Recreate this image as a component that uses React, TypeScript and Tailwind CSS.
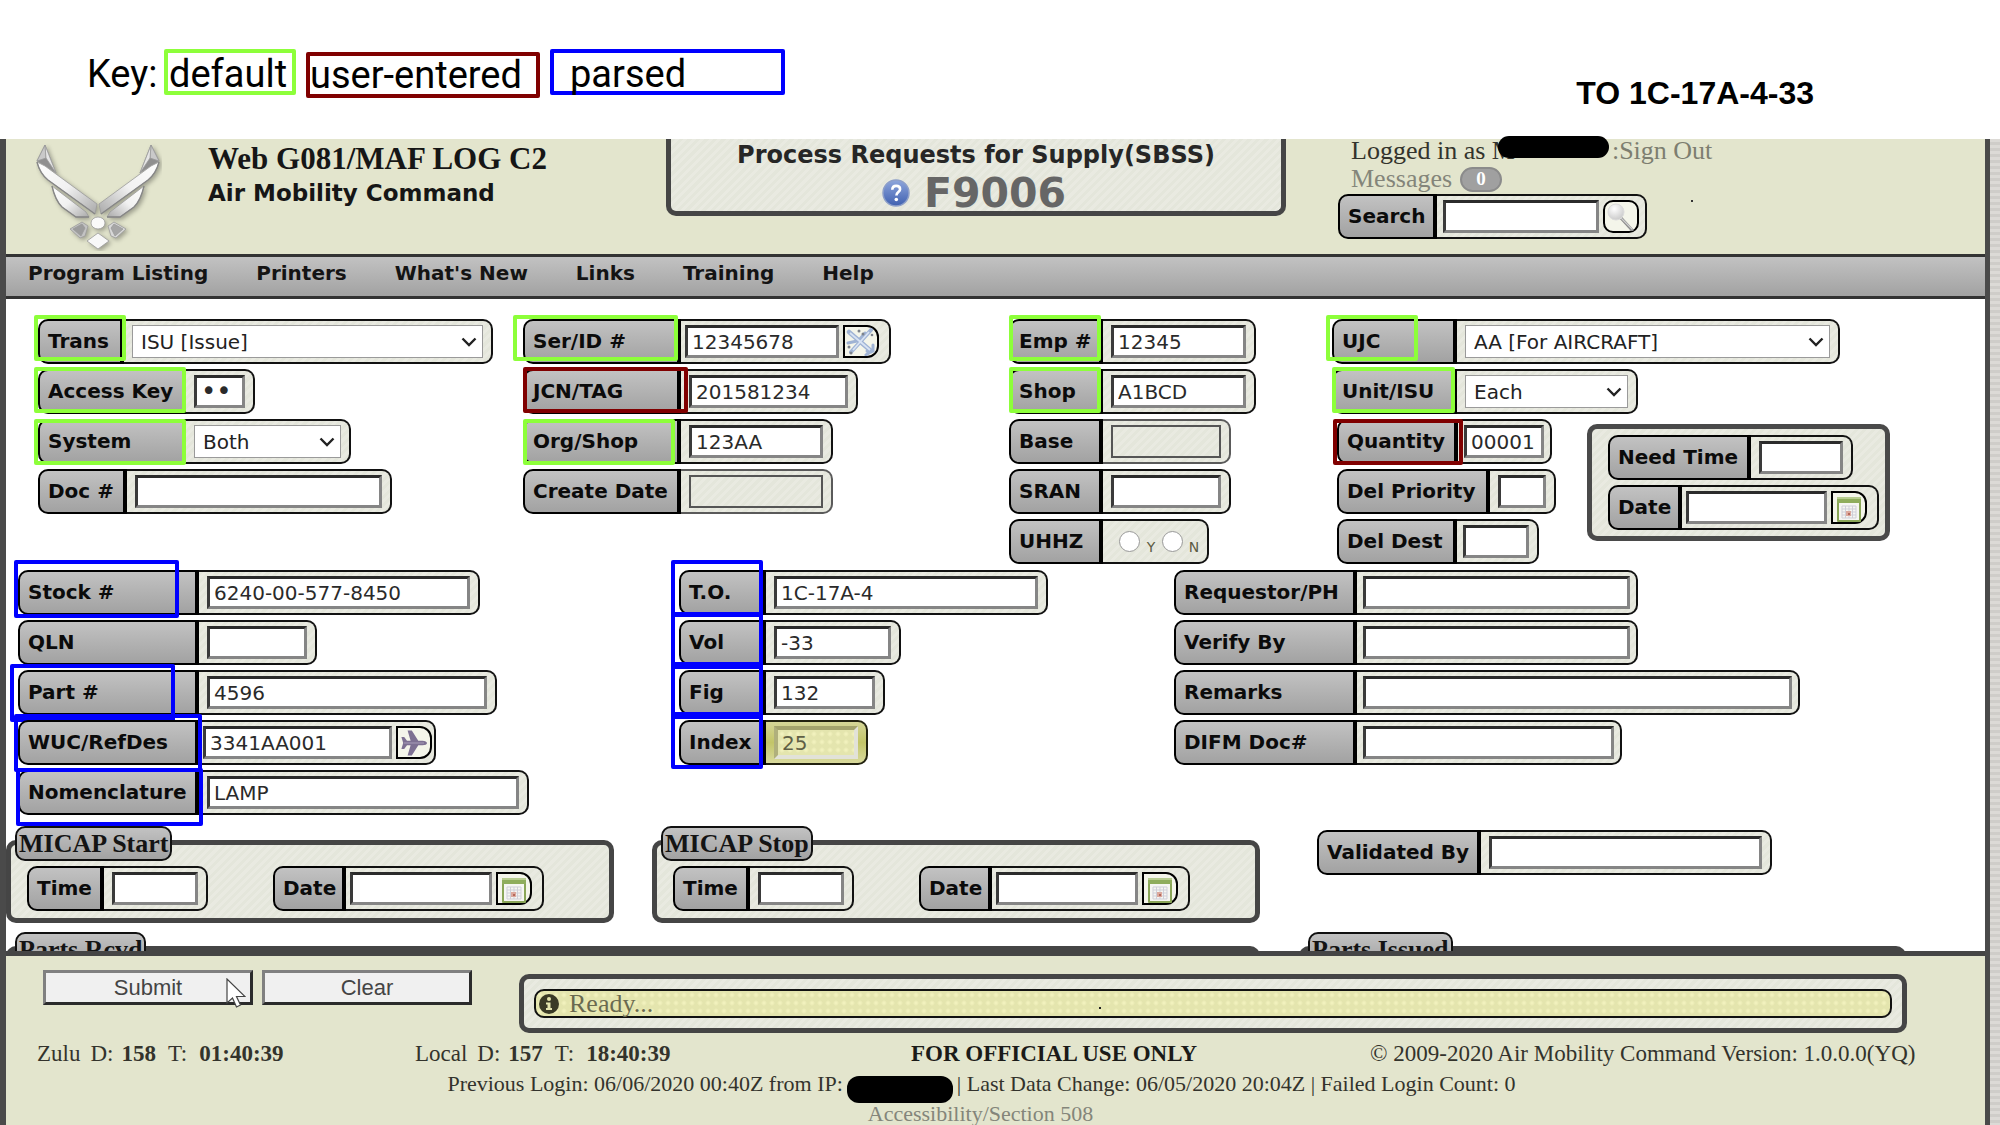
import React, { useId, useState } from "react";

const STRIPES =
  "bg-[repeating-linear-gradient(135deg,#e4e6db_0px,#e4e6db_3px,#e9eae1_3px,#e9eae1_6px)]";
const METAL = "bg-linear-to-b from-[#c2c2c2] to-[#a2a2a2]";
const DOTS =
  "bg-[#e4e5ae] bg-[radial-gradient(circle,#f1f1bd_1px,transparent_3px)] bg-[size:8px_8px]";

type FieldProps = {
  label: string;
  labelWidth: string;
  width: string;
  id?: string;
  mark?: string;
  tone?: "normal" | "disabled" | "yellow";
  pad?: string;
  children: React.ReactNode;
};

function Field({ label, labelWidth, width, id, mark, tone = "normal", pad = "px-2", children }: FieldProps) {
  const toneClass =
    tone === "disabled"
      ? `border-[#5a5a5a] ${STRIPES}`
      : tone === "yellow"
        ? "border-[#22220f] bg-linear-to-b from-[#d5d697] via-[#c3c568] to-[#d9da9d]"
        : `border-[#111] ${STRIPES}`;
  return (
    <div className={`relative flex h-[45px] shrink-0 ${width}`}>
      <label
        htmlFor={id}
        className={`flex shrink-0 items-center rounded-l-[10px] border-2 border-r-4 border-black pl-2 pb-0.5 text-[20px] font-bold whitespace-nowrap text-[#0b0b0b] ${METAL} ${labelWidth}`}
      >
        {label}
      </label>
      <div
        className={`flex min-w-0 flex-1 items-center gap-1 rounded-r-[10px] border-y-2 border-r-2 ${pad} ${toneClass}`}
      >
        {children}
      </div>
      {mark && <span className={`pointer-events-none absolute rounded-[2px] border-4 ${mark}`} />}
    </div>
  );
}

type TextFieldProps = Omit<FieldProps, "children" | "id"> & {
  value?: string;
  type?: string;
  button?: React.ReactNode;
};

function TextField({ value = "", type = "text", button, ...rest }: TextFieldProps) {
  const id = useId();
  const [text, setText] = useState(value);
  const look =
    rest.tone === "disabled"
      ? "border-2 border-[#555] bg-transparent"
      : rest.tone === "yellow"
        ? `border-4 border-t-[#a3a36c] border-l-[#b0b07c] border-r-[#e2e2d8] border-b-[#e2e2d8] text-[#5f5f45] ${DOTS}`
        : "border-[3px] border-t-[#2b2b2b] border-l-[#3a3a3a] border-r-[#858585] border-b-[#858585] bg-white text-[#2a2a2a]";
  return (
    <Field {...rest} id={id}>
      <input
        id={id}
        type={type}
        value={text}
        disabled={rest.tone === "disabled"}
        onChange={(e) => setText(e.target.value)}
        className={`h-[33px] w-full min-w-0 flex-1 px-1 outline-none ${
          type === "password" ? "text-[26px]" : "text-[20px]"
        } ${look}`}
      />
      {button}
    </Field>
  );
}

function SelectField({ value, ...rest }: Omit<FieldProps, "children" | "id"> & { value: string }) {
  const id = useId();
  return (
    <Field {...rest} id={id}>
      <div className="relative h-[33px] min-w-0 flex-1">
        <select
          id={id}
          className="h-full w-full appearance-none border border-[#9a9a9a] bg-white px-2 text-[20px] text-[#222] outline-none"
        >
          <option>{value}</option>
        </select>
        <svg
          viewBox="0 0 16 10"
          className="pointer-events-none absolute top-3 right-1.5 h-2.5 w-4"
          fill="none"
          stroke="#222"
          strokeWidth="2.4"
        >
          <path d="M1.5 1.5 8 8l6.500-6.500" />
        </svg>
      </div>
    </Field>
  );
}

function IconButton({ label, children, round }: { label: string; children: React.ReactNode; round?: boolean }) {
  return (
    <button
      type="button"
      aria-label={label}
      className={`flex h-[33px] w-9 shrink-0 items-center justify-center border-2 border-black bg-[#f4f5ea] ${
        round ? "rounded-[10px]" : "rounded-r-[12px]"
      }`}
    >
      {children}
    </button>
  );
}

function CalendarIcon() {
  return (
    <svg viewBox="0 0 26 28" className="h-7 w-[26px]">
      <rect x="1" y="3" width="24" height="25" rx="1" fill="#8aa657" />
      <rect x="1" y="3" width="24" height="6" fill="#8fad5c" />
      <rect x="1" y="3" width="24" height="2" fill="#b7cd8f" />
      <rect x="3" y="9" width="20" height="17" fill="#f6f6f2" />
      <g stroke="#cfcfd8" strokeWidth="1" fill="none">
        <path d="M6 12h14v12H6zM6 15h14M6 18h14M6 21h14M9.500 12v12M13 12v12M16.500 12v12" />
      </g>
      <rect x="10" y="17" width="5" height="5" fill="#dca99d" />
      <rect x="12" y="19" width="2" height="2" fill="#b5685b" />
    </svg>
  );
}

function PlaneIcon() {
  return (
    <svg viewBox="0 0 28 28" className="h-7 w-7">
      <path
        d="M27 14c0-1.300-2-2.300-4.500-2.300h-4.200L11.800 1.500H7.600l3 10.200H7L4.200 8H1.400l1.800 6-1.800 6h2.800L7 16.300h3.600l-3 10.200h4.200l6.500-10.200h4.200C25 16.300 27 15.300 27 14z"
        fill="#7d7092"
      />
      <path d="M4 14h20" stroke="#a094b2" strokeWidth="1.200" />
    </svg>
  );
}

function AircraftIcon() {
  return (
    <svg viewBox="0 0 30 28" className="h-7 w-[30px]">
      <g stroke="#9fb3d4" fill="none" strokeLinecap="round">
        <path d="M3 4 25 23" strokeWidth="4.500" />
        <path d="M25 2 5 24" strokeWidth="4" />
        <path d="M2 15l9-2M19 5l-5 6M20 27l7-5M27 17v6h-6" strokeWidth="3" />
      </g>
      <path d="M4 5 24 22M23 4 7 22" stroke="#d8e3f4" strokeWidth="1.800" />
      <g fill="#7c828c">
        <circle cx="13" cy="3" r="1.500" />
        <circle cx="17" cy="6" r="1.500" />
        <circle cx="3" cy="19" r="1.500" />
        <circle cx="5" cy="25" r="1.500" />
        <circle cx="26" cy="7" r="1.300" />
      </g>
    </svg>
  );
}

function SearchIcon() {
  return (
    <svg viewBox="0 0 30 28" className="h-7 w-[30px]">
      <defs>
        <radialGradient id="lens" cx="0.4" cy="0.3" r="0.8">
          <stop offset="0" stopColor="#fff" />
          <stop offset="1" stopColor="#c4c4c4" />
        </radialGradient>
      </defs>
      <path d="M15 15 26 27" stroke="#8c8c8c" strokeWidth="3" strokeLinecap="round" />
      <path d="M15 15 26 26" stroke="#cfcfcf" strokeWidth="1.200" strokeLinecap="round" />
      <circle cx="10" cy="9" r="8" fill="url(#lens)" stroke="#dcdcdc" />
    </svg>
  );
}

function WingsLogo() {
  return (
    <svg viewBox="0 0 126 108" className="h-[108px] w-[126px]" aria-label="Air Force emblem" role="img">
      <defs>
        <linearGradient id="silver" x1="0" y1="0" x2="1" y2="1">
          <stop offset="0" stopColor="#fdfdfd" />
          <stop offset="0.500" stopColor="#f1f1f1" />
          <stop offset="1" stopColor="#a9a9a9" />
        </linearGradient>
        <g id="wing">
          <path d="M9 2 1 18l19 12z" fill="#8f8f8f" />
          <path d="M9 2 1 18l9-3z" fill="#c9c9c9" />
          <path d="M9 2l11 28-10-15z" fill="#e6e6e6" />
          <path d="M1 19l8 4 52 38-2 10L12 37C7 33 3 27 1 19z" fill="url(#silver)" />
          <path d="M16 43l34 26 3 5H40L26 64c-5-5-8-12-10-21z" fill="url(#silver)" />
          <path d="M1 19c2 8 6 14 11 18l47 34" fill="none" stroke="#868686" strokeWidth="1.300" />
          <path d="M16 43c2 9 5 16 10 21l14 10h13" fill="none" stroke="#868686" strokeWidth="1.300" />
        </g>
      </defs>
      <g stroke="#9b9b9b" strokeWidth="0.800" className="drop-shadow-[2px_2px_2px_rgba(0,0,0,0.3)]">
        <use href="#wing" />
        <use href="#wing" transform="translate(124 0) scale(-1 1)" />
        <ellipse cx="62" cy="80" rx="7" ry="6" fill="#fafafa" />
        <path d="M34 86l12-7 6 4-3 10-5 2z" fill="#c3c3c3" />
        <path d="M37 86l9-5 3 4-4 8z" fill="#9c9c9c" />
        <path d="M90 86l-12-7-6 4 3 10 5 2z" fill="#d8d8d8" />
        <path d="M87 86l-9-5-3 4 4 8z" fill="#a6a6a6" />
        <path d="M62 90l11 8-11 8-11-8z" fill="#f8f8f8" />
      </g>
    </svg>
  );
}

const GREEN = "border-[#8dff3a]";
const RED = "border-[#800000]";
const BLUE = "border-[#0000ff]";

function KeyBar() {
  return (
    <div className="flex h-[139px] shrink-0 items-start justify-between bg-white pr-[186px] pl-[87px] text-black">
      <div className="flex items-start pt-[49px] font-['Roboto',sans-serif] text-[38px] leading-[42px]">
        <span className="w-[77px] pt-1">Key:</span>
        <span className="mr-2.5 flex h-[46px] w-[132px] items-center rounded-[2px] border-4 border-[#8dff3a] pt-1 pl-px">
          default
        </span>
        <span className="mt-[3px] mr-2.5 flex h-[46px] w-[234px] items-center rounded-[2px] border-4 border-[#800000]">
          user-entered
        </span>
        <span className="flex h-[46px] w-[235px] items-center rounded-[2px] border-4 border-[#0000ff] pt-1 pl-4">
          parsed
        </span>
      </div>
      <div className="pt-[75px] font-['Liberation_Sans',sans-serif] text-[32px] leading-9 font-bold">
        TO 1C-17A-4-33
      </div>
    </div>
  );
}

function Header() {
  return (
    <header className="grid h-[115px] shrink-0 grid-cols-[660fr_620fr_699fr] bg-[#e3e5cd]">
      <div className="flex pt-1 pl-[30px]">
        <WingsLogo />
        <div className="pl-[46px]">
          <div className="font-['Liberation_Serif',serif] text-[31px] leading-8 font-bold whitespace-nowrap text-[#161616]">
            Web G081/MAF LOG C2
          </div>
          <div className="pt-0.5 text-[23px] leading-8 font-bold whitespace-nowrap text-[#161616]">
            Air Mobility Command
          </div>
        </div>
      </div>
      <div
        className={`flex h-[77px] flex-col items-center rounded-b-[10px] border-x-[5px] border-b-[5px] border-[#454545] ${STRIPES}`}
      >
        <h1 className="text-[24px] leading-8 font-bold whitespace-nowrap text-[#262626]">
          Process Requests for Supply(SBSS)
        </h1>
        <div className="flex items-center gap-3.5 pr-1">
          <svg viewBox="0 0 28 28" className="size-7" aria-label="Help" role="img">
            <defs>
              <linearGradient id="help" x1="0" y1="0" x2="0" y2="1">
                <stop offset="0" stopColor="#8ea6dc" />
                <stop offset="1" stopColor="#3f60b0" />
              </linearGradient>
            </defs>
            <circle cx="14" cy="14" r="13" fill="url(#help)" stroke="#8d9fc9" strokeWidth="1.500" />
            <path
              d="M10.300 10.800c0-2.400 1.600-3.900 3.900-3.900 2.300 0 3.900 1.300 3.900 3.300 0 2.900-3.700 2.900-3.700 6.300"
              fill="none"
              stroke="#fff"
              strokeWidth="2.600"
            />
            <circle cx="14.300" cy="20.500" r="1.800" fill="#fff" />
          </svg>
          <span className="text-[41px] leading-[44px] font-bold text-[#666]">F9006</span>
        </div>
      </div>
      <div className="relative pl-[52px] font-['Liberation_Serif',serif] text-[26px] text-[#33332c]">
        <div className="relative flex pl-[13px] leading-[23px] whitespace-nowrap">
          <span>Logged in as M</span>
          <span className="absolute top-[-3px] left-[160px] h-[22px] w-[111px] rounded-[11px] bg-black" />
          <a href="#signout" className="ml-[97px] text-[#7d7e70]">
            :Sign Out
          </a>
        </div>
        <div className="flex items-center gap-2 pt-1 pb-0.5 pl-[13px] leading-[26px]">
          <a href="#messages" className="text-[#84857a]">
            Messages
          </a>
          <span className="flex h-[25px] w-[42px] items-center justify-center rounded-full border-2 border-[#8b8b8b] bg-[#a0a0a0] text-[19px] font-bold text-white">
            0
          </span>
        </div>
        <div className="font-['DejaVu_Sans',sans-serif]">
          <TextField
            label="Search"
            labelWidth="w-[99px]"
            width="w-[309px]"
            pad="pl-1.5 pr-1.5"
            button={
              <IconButton label="Search" round>
                <SearchIcon />
              </IconButton>
            }
          />
        </div>
        <span className="absolute top-[61px] left-[405px] size-0.5 bg-[#333]" />
      </div>
    </header>
  );
}

function Nav() {
  const items = ["Program Listing", "Printers", "What's New", "Links", "Training", "Help"];
  return (
    <nav
      className={`flex h-[45px] shrink-0 items-center gap-12 border-y-[3px] border-[#333] pb-2 pl-[22px] text-[20px] font-bold text-[#141414] ${METAL}`}
    >
      {items.map((item) => (
        <a key={item} href="#menu" className="whitespace-nowrap">
          {item}
        </a>
      ))}
    </nav>
  );
}

function Uhhz() {
  return (
    <Field label="UHHZ" labelWidth="w-[94px]" width="w-[200px]">
      <div role="radiogroup" aria-label="UHHZ" className="flex items-center pl-2 text-[14px] text-[#5c5c44]">
        {["Y", "N"].map((name) => (
          <label key={name} className="flex items-center">
            <input
              type="radio"
              name="uhhz"
              className="size-[21px] appearance-none rounded-full border border-[#999] bg-white checked:bg-[#555]"
            />
            <span className="w-[22px] pt-3 text-center">{name}</span>
          </label>
        ))}
      </div>
    </Field>
  );
}

function CalendarButton() {
  return (
    <IconButton label="Pick a date">
      <CalendarIcon />
    </IconButton>
  );
}

function RequestFields() {
  return (
    <section className="grid shrink-0 grid-cols-[minmax(0,485fr)_minmax(0,486fr)_minmax(0,323fr)_minmax(0,255fr)_minmax(0,398fr)] pt-[20px] pl-8">
      <div className="flex flex-col gap-[5px]">
        <SelectField label="Trans" value="ISU [Issue]" labelWidth="w-[86px]" width="w-[455px]" mark={`${GREEN} -left-1 -top-1 h-[46px] w-[92px]`} />
        <TextField label="Access Key" type="password" value="ab" labelWidth="w-[148px]" width="w-[217px]" mark={`${GREEN} -left-1 -top-0.5 h-[46px] w-[152px]`} />
        <SelectField label="System" value="Both" labelWidth="w-[148px]" width="w-[313px]" mark={`${GREEN} -left-1 top-0 h-[46px] w-[152px]`} />
        <TextField label="Doc #" labelWidth="w-[89px]" width="w-[354px]" />
      </div>
      <div className="flex flex-col gap-[5px]">
        <TextField
          label="Ser/ID #"
          value="12345678"
          labelWidth="w-[158px]"
          width="w-[368px]"
          pad="pl-1 pr-2.5"
          mark={`${GREEN} -left-2.5 -top-1 h-[46px] w-[165px]`}
          button={
            <IconButton label="Aircraft lookup">
              <AircraftIcon />
            </IconButton>
          }
        />
        <TextField label="JCN/TAG" value="201581234" labelWidth="w-[158px]" width="w-[335px]" mark={`${RED} left-0 -top-0.5 h-[46px] w-[165px]`} />
        <TextField label="Org/Shop" value="123AA" labelWidth="w-[158px]" width="w-[310px]" mark={`${GREEN} left-0 top-0 h-[46px] w-[152px]`} />
        <TextField label="Create Date" tone="disabled" labelWidth="w-[158px]" width="w-[310px]" />
      </div>
      <div className="flex flex-col gap-[5px]">
        <TextField label="Emp #" value="12345" labelWidth="w-[94px]" width="w-[247px]" mark={`${GREEN} left-0 -top-1 h-[46px] w-[92px]`} />
        <TextField label="Shop" value="A1BCD" labelWidth="w-[94px]" width="w-[247px]" mark={`${GREEN} left-0 -top-0.5 h-[46px] w-[92px]`} />
        <TextField label="Base" tone="disabled" labelWidth="w-[94px]" width="w-[222px]" />
        <TextField label="SRAN" labelWidth="w-[94px]" width="w-[222px]" />
        <Uhhz />
      </div>
      <div className="flex flex-col gap-[5px]">
        <SelectField label="UJC" value="AA [For AIRCRAFT]" labelWidth="w-[125px]" width="w-[508px]" mark={`${GREEN} -left-1.5 -top-1 h-[46px] w-[92px]`} />
        <SelectField label="Unit/ISU" value="Each" labelWidth="w-[125px]" width="w-[306px]" mark={`${GREEN} left-0 -top-0.5 h-[46px] w-[123px]`} />
        <div className="flex flex-col gap-[5px] pl-[5px]">
          <TextField label="Quantity" value="00001" labelWidth="w-[121px]" width="w-[215px]" pad="px-1.5" mark={`${RED} -left-1 top-0 h-[46px] w-[130px]`} />
          <TextField label="Del Priority" labelWidth="w-[153px]" width="w-[219px]" />
          <TextField label="Del Dest" labelWidth="w-[120px]" width="w-[202px]" pad="pl-1.5 pr-2" />
        </div>
      </div>
      <div className="pt-[105px]">
        <div className={`flex w-[303px] flex-col gap-[5px] rounded-[10px] border-[5px] border-[#4a4a4a] px-4 py-[6px] ${STRIPES}`}>
          <TextField label="Need Time" labelWidth="w-[143px]" width="w-[245px]" />
          <TextField label="Date" labelWidth="w-[74px]" width="w-[271px]" pad="pl-1 pr-2.5" button={<CalendarButton />} />
        </div>
      </div>
    </section>
  );
}

function PartFields() {
  return (
    <section className="grid shrink-0 grid-cols-[661fr_495fr_811fr] pt-[6px] pl-3">
      <div className="flex flex-col gap-[5px]">
        <TextField label="Stock #" value="6240-00-577-8450" labelWidth="w-[181px]" width="w-[462px]" mark={`${BLUE} -left-1 -top-2.5 h-[58px] w-[165px]`} />
        <TextField label="QLN" labelWidth="w-[181px]" width="w-[299px]" />
        <TextField label="Part #" value="4596" labelWidth="w-[181px]" width="w-[479px]" mark={`${BLUE} -left-2 -top-1.5 h-[58px] w-[165px]`} />
        <TextField
          label="WUC/RefDes"
          value="3341AA001"
          labelWidth="w-[181px]"
          width="w-[418px]"
          pad="pl-1 pr-0.5"
          mark={`${BLUE} -left-1 -top-1.5 h-[58px] w-[188px]`}
          button={
            <IconButton label="Reference lookup">
              <PlaneIcon />
            </IconButton>
          }
        />
        <TextField label="Nomenclature" value="LAMP" labelWidth="w-[181px]" width="w-[511px]" mark={`${BLUE} -left-0.5 -top-0.5 h-[58px] w-[187px]`} />
      </div>
      <div className="flex flex-col gap-[5px]">
        <TextField label="T.O." value="1C-17A-4" labelWidth="w-[87px]" width="w-[369px]" mark={`${BLUE} -left-2 -top-2.5 h-[57px] w-[92px]`} />
        <TextField label="Vol" value="-33" labelWidth="w-[87px]" width="w-[222px]" mark={`${BLUE} -left-2 -top-2 h-[57px] w-[92px]`} />
        <TextField label="Fig" value="132" labelWidth="w-[87px]" width="w-[206px]" mark={`${BLUE} -left-2 -top-2 h-[57px] w-[92px]`} />
        <TextField label="Index" value="25" tone="yellow" labelWidth="w-[87px]" width="w-[189px]" mark={`${BLUE} -left-2 -top-2 h-[57px] w-[92px]`} />
      </div>
      <div className="flex flex-col gap-[5px]">
        <TextField label="Requestor/PH" labelWidth="w-[183px]" width="w-[464px]" pad="px-1.5" />
        <TextField label="Verify By" labelWidth="w-[183px]" width="w-[464px]" pad="px-1.5" />
        <TextField label="Remarks" labelWidth="w-[183px]" width="w-[626px]" pad="px-1.5" />
        <TextField label="DIFM Doc#" labelWidth="w-[183px]" width="w-[448px]" pad="px-1.5" />
      </div>
    </section>
  );
}

function Legend({ children }: { children: React.ReactNode }) {
  return (
    <div
      className={`absolute -top-[19px] left-1 h-[35px] rounded-[10px] border-2 border-[#111] px-0.5 font-['Liberation_Serif',serif] text-[26px] leading-[31px] font-bold whitespace-nowrap text-[#141414] ${METAL}`}
    >
      {children}
    </div>
  );
}

function MicapPanel({ title }: { title: string }) {
  return (
    <div className={`relative w-[608px] rounded-[10px] border-[5px] border-[#454545] pt-[21px] pb-[7px] pl-4 ${STRIPES}`}>
      <Legend>{title}</Legend>
      <div className="flex gap-[65px]">
        <TextField label="Time" labelWidth="w-[77px]" width="w-[181px]" />
        <TextField label="Date" labelWidth="w-[73px]" width="w-[271px]" pad="pl-1 pr-2.5" button={<CalendarButton />} />
      </div>
    </div>
  );
}

function BottomSections() {
  return (
    <>
      <section className="grid shrink-0 grid-cols-[646fr_665fr_668fr] pt-[25px]">
        <MicapPanel title="MICAP Start" />
        <MicapPanel title="MICAP Stop" />
        <div className="-mt-2.5">
          <TextField label="Validated By" labelWidth="w-[164px]" width="w-[455px]" />
        </div>
      </section>
      <section className="grid h-[28px] shrink-0 grid-cols-[1293fr_686fr] overflow-hidden pt-[23px]">
        <div className="relative mr-[39px] h-20 rounded-[10px] border-[5px] border-[#454545]">
          <Legend>Parts Rcvd</Legend>
        </div>
        <div className="relative mr-[79px] h-20 rounded-[10px] border-[5px] border-[#454545]">
          <Legend>Parts Issued</Legend>
        </div>
      </section>
    </>
  );
}

function Clock({ zone, day, time }: { zone: string; day: string; time: string }) {
  return (
    <div className="flex whitespace-nowrap">
      <span className="mr-2.5">{zone}</span>
      <span className="mr-2">D:</span>
      <b className="mr-3">{day}</b>
      <span className="mr-3">T:</span>
      <b>{time}</b>
    </div>
  );
}

const PUSH =
  "h-[35px] w-[210px] border-[3px] border-t-[#808080] border-l-[#808080] border-r-[#2b2b2b] border-b-[#2b2b2b] bg-[#f0f0f0] font-['Liberation_Sans',sans-serif] text-[22px] leading-7 text-[#444]";

function Footer() {
  return (
    <footer className="flex-1 border-t-[5px] border-[#454545] bg-[#e3e5cd] font-['Liberation_Serif',serif] text-[#33332c]">
      <div className="flex items-start pt-[14px] pr-[78px] pl-[37px]">
        <div className="relative mr-[9px]">
          <button type="submit" className={PUSH}>
            Submit
          </button>
          <svg viewBox="0 0 20 30" className="pointer-events-none absolute top-2 left-[183px] h-[30px] w-5">
            <path d="M1 1v24l5.500-5 4 9 4-2-4-8.500H19z" fill="#fff" stroke="#444" strokeWidth="1.200" />
          </svg>
        </div>
        <button type="reset" className={PUSH}>
          Clear
        </button>
        <div className={`mt-1 ml-[47px] h-[59px] flex-1 rounded-[10px] border-[5px] border-[#454545] px-2.5 py-2.5 ${STRIPES}`}>
          <div
            role="status"
            className={`relative flex h-[29px] items-center gap-2.5 rounded-[10px] border-2 border-[#111] pl-[3px] text-[26px] leading-6 text-[#6a6a50] ${DOTS}`}
          >
            <svg viewBox="0 0 20 20" className="size-5">
              <circle cx="10" cy="10" r="10" fill="#3a3a26" />
              <circle cx="10" cy="5" r="2" fill="#e4e5ae" />
              <path d="M7 8.500h4.500V14H13v2H7v-2h1.500v-3.500H7z" fill="#e4e5ae" />
            </svg>
            Ready...
            <span className="absolute top-4 left-[563px] size-0.5 bg-[#222]" />
          </div>
        </div>
      </div>
      <div className="grid grid-cols-[378fr_496fr_459fr_615fr] pt-[7px] pl-[31px] text-[23px] leading-7">
        <Clock zone="Zulu" day="158" time="01:40:39" />
        <Clock zone="Local" day="157" time="18:40:39" />
        <b className="whitespace-nowrap text-[#1b1b18]">FOR OFFICIAL USE ONLY</b>
        <span className="whitespace-nowrap">© 2009-2020 Air Mobility Command Version: 1.0.0.0(YQ)</span>
      </div>
      <div className="flex h-8 justify-center pt-0.5 pr-7 text-[22px] leading-7 whitespace-nowrap">
        <span>Previous Login: 06/06/2020 00:40Z from IP:</span>
        <span className="mx-1 mt-1.5 h-[27px] w-[106px] shrink-0 rounded-[12px] bg-black" />
        <span>| Last Data Change: 06/05/2020 20:04Z | Failed Login Count: 0</span>
      </div>
      <div className="flex justify-center pr-[30px] text-[22px] leading-7">
        <a href="#section508" className="text-[#84857a]">
          Accessibility/Section 508
        </a>
      </div>
    </footer>
  );
}

export default function App() {
  return (
    <div className="flex h-screen min-h-[1125px] flex-col overflow-hidden bg-white font-['DejaVu_Sans',sans-serif]">
      <KeyBar />
      <div className="flex min-h-0 flex-1 bg-[repeating-linear-gradient(180deg,#dcdad6_0px,#dcdad6_3px,#cfcdc9_3px,#cfcdc9_6px)] pr-2.5">
        <form
          onSubmit={(e) => e.preventDefault()}
          className="flex min-w-0 flex-1 flex-col border-r-[5px] border-l-[6px] border-[#4a4a4a] bg-white"
        >
          <Header />
          <Nav />
          <RequestFields />
          <PartFields />
          <BottomSections />
          <Footer />
        </form>
      </div>
    </div>
  );
}
